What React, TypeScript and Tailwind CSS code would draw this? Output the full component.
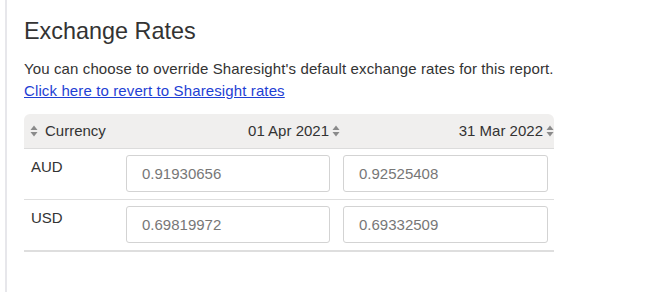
import React from "react";

function SortIcon() {
  return (
    <svg width="8" height="12" viewBox="0 0 8 12" className="inline-block shrink-0">
      <path d="M4 0.5 L7.5 5 L0.5 5 Z" fill="#8a8a8a" />
      <path d="M4 11.5 L7.5 7 L0.5 7 Z" fill="#8a8a8a" />
    </svg>
  );
}

const rows = [
  { code: "AUD", start: "0.91930656", end: "0.92525408" },
  { code: "USD", start: "0.69819972", end: "0.69332509" },
];

export default function App() {
  return (
    <div
      className="w-[666px] h-[292px] bg-white flex overflow-hidden text-[#333]"
      style={{ fontFamily: '"Liberation Sans", Arial, sans-serif' }}
    >
      <div className="w-[5px] shrink-0" />
      <div className="w-[2px] shrink-0 bg-[#e7e7eb]" />
      <div className="pl-[17px] pt-[16px] flex-1">
        <h2 className="text-[23.4px] leading-[30px] font-normal text-[#333]">Exchange Rates</h2>
        <p className="mt-[12px] text-[15px] leading-[22px] tracking-[0.12px]">
          You can choose to override Sharesight's default exchange rates for this report.
          <br />
          <a href="#" className="text-[#1f3fd4] underline">
            Click here to revert to Sharesight rates
          </a>
        </p>

        <div className="mt-[12px] w-[530px]">
          <div className="h-[35px] bg-[#f0efee] rounded-t-[6px] border-b border-[#dcdcdc] flex items-center text-[15px]">
            <div className="w-[96px] pl-[6px] flex items-center gap-[7px]">
              <SortIcon />
              <span>Currency</span>
            </div>
            <div className="w-[220px] flex items-center justify-end gap-[3px]">
              <span>01 Apr 2021</span>
              <SortIcon />
            </div>
            <div className="flex-1 flex items-center justify-end gap-[3px]">
              <span>31 Mar 2022</span>
              <SortIcon />
            </div>
          </div>

          {rows.map((r, i) => (
            <div
              key={r.code}
              className={
                "flex pt-[6px] pb-[7px] " +
                (i === rows.length - 1 ? "border-b-2 border-[#dedede]" : "border-b border-[#dedede]")
              }
            >
              <div className="w-[102px] pl-[7px] pt-[2px] text-[15px] leading-[20px]">{r.code}</div>
              <input
                readOnly
                value={r.start}
                className="w-[204px] h-[37px] border border-[#d3d3d3] rounded-[3px] pl-[15px] text-[15px] text-[#777] outline-none"
              />
              <input
                readOnly
                value={r.end}
                className="ml-[13px] w-[205px] h-[37px] border border-[#d3d3d3] rounded-[3px] pl-[15px] text-[15px] text-[#777] outline-none"
              />
            </div>
          ))}
        </div>
      </div>
    </div>
  );
}
